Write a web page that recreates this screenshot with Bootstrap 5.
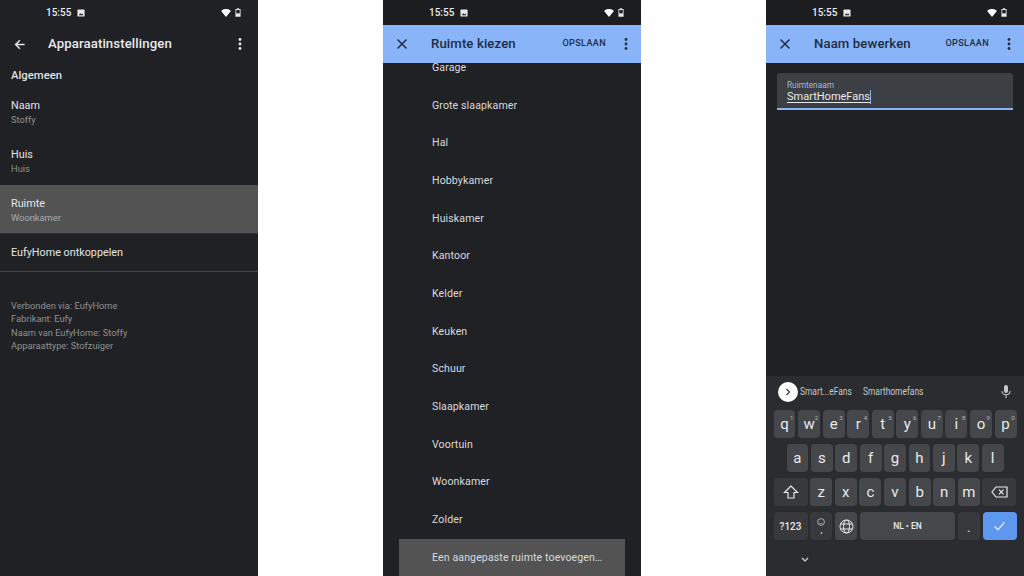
<!DOCTYPE html>
<html lang="nl">
<head>
<meta charset="UTF-8">
<title>Instellingen</title>
<link href="https://cdn.jsdelivr.net/npm/bootstrap@5.3.0/dist/css/bootstrap.min.css" rel="stylesheet">
<style>
html, body { height: 576px; margin: 0; overflow: hidden; background: #fff; }
body { font-family: Roboto, "Liberation Sans", sans-serif; }
.screens { width: 1024px; height: 576px; }
.phone { width: 258px; height: 576px; background: #202124; color: #e8eaed; overflow: hidden; }
.status-bar { height: 25px; padding: 0 17px 0 46px; background: #1c1d20; font-size: 10px; font-weight: 500; color: #e8eaed; flex: none; }
.phone-first .status-bar { background: #202124; }
.status-pic { margin-left: 6px; }
.tool-bar { height: 38px; flex: none; padding: 0 13px 0 12px; }
.phone-first .tool-bar { padding: 0 16px 0 14px; }
.tool-blue { background: #8ab4f8; color: #202c44; }
.tool-title { font-size: 13.2px; font-weight: 500; margin-left: 23px; letter-spacing: .1px; }
.tool-blue .tool-title { margin-left: 22px; }
.save-btn { font-size: 9.1px; font-weight: 500; letter-spacing: .35px; margin-right: 18px; }
.section-label { font-size: 11.3px; font-weight: 500; color: #dfe1e5; padding: 6px 11px 0; height: 24px; line-height: 14px; }
.set-row { height: 49px; padding: 3px 11px 0; }
.set-row b { font-weight: 400; font-size: 10.8px; line-height: 14px; display: block; color: #e3e5e8; }
.set-row span { font-size: 9.3px; line-height: 14px; color: #8e9194; display: block; }
.set-row.active { background: #535353; border-bottom: 1px solid #2e2f32; padding-top: 4px; }
.set-row.active span { color: #a8abae; }
.unlink-row { height: 38px; padding: 2px 11px 0; font-size: 10.8px; color: #e3e5e8; border-bottom: 1.5px solid #46474a; }
.info-lines { padding: 27px 11px 0; font-size: 9.3px; line-height: 13.4px; color: #8e9194; }
.room-list { margin-top: -14px; }
.room-item { height: 37.7px; padding-left: 49px; font-size: 10.6px; color: #d8dade; letter-spacing: .1px; }
.room-add { margin: 0 16px; padding-left: 33px; height: 38px; background: #535353; }
.name-field { margin: 10px 11px 0; height: 37px; background: #3c3f43; border-radius: 3px 3px 0 0; border-bottom: 2px solid #8ab4f8; padding: 7px 10px 0; }
.name-field small { display: block; font-size: 8.3px; line-height: 10px; color: #a5b9d8; }
.name-field span { font-size: 11px; line-height: 14px; text-decoration: underline; text-underline-offset: 2px; border-right: 1px solid #8ab4f8; display: block; width: fit-content; }
.kbd-panel { background: #2a2c30; height: 200px; padding: 0 7.5px; flex: none; }
.suggest-row { height: 31px; margin-bottom: 3px; font-size: 11.5px; color: #c5c8cc; padding-left: 4px; padding-right: 2px; }
.suggest-go { width: 20px; height: 20px; background: #fff; border-radius: 50%; margin-right: 2px; }
.suggest-word { transform: scaleX(.73); transform-origin: left center; width: 63px; white-space: nowrap; }
.key-row { height: 28px; margin-bottom: 6px; gap: 2.6px; }
.key-row-mid { padding: 0 13px; }
.kk { flex: 1 1 0; min-width: 0; background: #45474b; border-radius: 4px; color: #e8eaed; font-size: 15px; position: relative; }
.kk sup { position: absolute; top: 5px; right: 2px; font-size: 6px; line-height: 6px; color: #b5b7ba; }
.kk-dark { background: #37393d; }
.kk-wide { flex: 0 0 34px; }
.kk-sym { font-size: 10px; font-weight: 500; }
.kk-space { flex: 0 0 95px; font-size: 8.5px; font-weight: 500; }
.kk-enter { background: #5e97ee; }
.kk-emoji { font-size: 9px; line-height: 9px; }
.hide-row { height: 26px; padding-left: 27px; }
</style>
</head>
<body>
<div class="screens d-flex justify-content-between">

  <!-- Apparaatinstellingen -->
  <div class="phone phone-first d-flex flex-column">
    <div class="status-bar d-flex align-items-center">
      <span>15:55</span>
      <svg class="status-pic" width="8" height="8" viewBox="0 0 9 9"><rect x=".5" y=".5" width="8" height="8" rx="1" fill="#e8eaed"/><path d="M2 7l1.6-2.2L5 6l1-1 1.2 2z" fill="#202124"/></svg>
      <svg class="ms-auto" width="10" height="8" viewBox="0 0 11 9"><path d="M0 2.2C3-.6 8-.6 11 2.2L5.500 9z" fill="#fff"/></svg>
      <svg class="ms-1" width="6" height="9" viewBox="0 0 7 10"><path d="M2.300 0h2.400v1H6.500v9H.5V1h1.800z" fill="#e8eaed"/><rect x="1.500" y="2" width="4" height="4" fill="#202124"/></svg>
    </div>
    <div class="tool-bar d-flex align-items-center">
      <svg width="11" height="11" viewBox="0 0 14 14"><path d="M13.500 7H2M7.500 1.500L2 7l5.500 5.500" fill="none" stroke="#e8eaed" stroke-width="1.800"/></svg>
      <div class="tool-title">Apparaatinstellingen</div>
      <svg class="ms-auto" width="4" height="12" viewBox="0 0 4 12"><circle cx="2" cy="1.500" r="1.400" fill="#e8eaed"/><circle cx="2" cy="6" r="1.400" fill="#e8eaed"/><circle cx="2" cy="10.500" r="1.400" fill="#e8eaed"/></svg>
    </div>
    <div class="section-label">Algemeen</div>
    <div class="set-row d-flex flex-column justify-content-center"><b>Naam</b><span>Stoffy</span></div>
    <div class="set-row d-flex flex-column justify-content-center"><b>Huis</b><span>Huis</span></div>
    <div class="set-row active d-flex flex-column justify-content-center"><b>Ruimte</b><span>Woonkamer</span></div>
    <div class="unlink-row d-flex align-items-center">EufyHome ontkoppelen</div>
    <div class="info-lines">Verbonden via: EufyHome<br>Fabrikant: Eufy<br>Naam van EufyHome: Stoffy<br>Apparaattype: Stofzuiger</div>
  </div>

  <!-- Ruimte kiezen -->
  <div class="phone d-flex flex-column">
    <div class="status-bar d-flex align-items-center">
      <span>15:55</span>
      <svg class="status-pic" width="8" height="8" viewBox="0 0 9 9"><rect x=".5" y=".5" width="8" height="8" rx="1" fill="#e8eaed"/><path d="M2 7l1.6-2.2L5 6l1-1 1.2 2z" fill="#202124"/></svg>
      <svg class="ms-auto" width="10" height="8" viewBox="0 0 11 9"><path d="M0 2.2C3-.6 8-.6 11 2.2L5.500 9z" fill="#fff"/></svg>
      <svg class="ms-1" width="6" height="9" viewBox="0 0 7 10"><path d="M2.300 0h2.400v1H6.500v9H.5V1h1.800z" fill="#e8eaed"/><rect x="1.500" y="2" width="4" height="4" fill="#202124"/></svg>
    </div>
    <div class="tool-bar tool-blue d-flex align-items-center">
      <svg width="14" height="12" viewBox="0 0 14 12"><path d="M2.500 1.500l9 9M11.500 1.500l-9 9" fill="none" stroke="#202c44" stroke-width="1.500"/></svg>
      <div class="tool-title">Ruimte kiezen</div>
      <div class="save-btn ms-auto">OPSLAAN</div>
      <svg width="4" height="12" viewBox="0 0 4 12"><circle cx="2" cy="1.500" r="1.400" fill="#202c44"/><circle cx="2" cy="6" r="1.400" fill="#202c44"/><circle cx="2" cy="10.500" r="1.400" fill="#202c44"/></svg>
    </div>
    <div class="overflow-hidden flex-grow-1">
      <div class="room-list">
        <div class="room-item d-flex align-items-center">Garage</div>
        <div class="room-item d-flex align-items-center">Grote slaapkamer</div>
        <div class="room-item d-flex align-items-center">Hal</div>
        <div class="room-item d-flex align-items-center">Hobbykamer</div>
        <div class="room-item d-flex align-items-center">Huiskamer</div>
        <div class="room-item d-flex align-items-center">Kantoor</div>
        <div class="room-item d-flex align-items-center">Kelder</div>
        <div class="room-item d-flex align-items-center">Keuken</div>
        <div class="room-item d-flex align-items-center">Schuur</div>
        <div class="room-item d-flex align-items-center">Slaapkamer</div>
        <div class="room-item d-flex align-items-center">Voortuin</div>
        <div class="room-item d-flex align-items-center">Woonkamer</div>
        <div class="room-item d-flex align-items-center">Zolder</div>
        <div class="room-item room-add d-flex align-items-center">Een aangepaste ruimte toevoegen…</div>
      </div>
    </div>
  </div>

  <!-- Naam bewerken -->
  <div class="phone d-flex flex-column">
    <div class="status-bar d-flex align-items-center">
      <span>15:55</span>
      <svg class="status-pic" width="8" height="8" viewBox="0 0 9 9"><rect x=".5" y=".5" width="8" height="8" rx="1" fill="#e8eaed"/><path d="M2 7l1.6-2.2L5 6l1-1 1.2 2z" fill="#202124"/></svg>
      <svg class="ms-auto" width="10" height="8" viewBox="0 0 11 9"><path d="M0 2.2C3-.6 8-.6 11 2.2L5.500 9z" fill="#fff"/></svg>
      <svg class="ms-1" width="6" height="9" viewBox="0 0 7 10"><path d="M2.300 0h2.400v1H6.500v9H.5V1h1.800z" fill="#e8eaed"/><rect x="1.500" y="2" width="4" height="4" fill="#202124"/></svg>
    </div>
    <div class="tool-bar tool-blue d-flex align-items-center">
      <svg width="14" height="12" viewBox="0 0 14 12"><path d="M2.500 1.500l9 9M11.500 1.500l-9 9" fill="none" stroke="#202c44" stroke-width="1.500"/></svg>
      <div class="tool-title">Naam bewerken</div>
      <div class="save-btn ms-auto">OPSLAAN</div>
      <svg width="4" height="12" viewBox="0 0 4 12"><circle cx="2" cy="1.500" r="1.400" fill="#202c44"/><circle cx="2" cy="6" r="1.400" fill="#202c44"/><circle cx="2" cy="10.500" r="1.400" fill="#202c44"/></svg>
    </div>
    <div class="name-field">
      <small>Ruimtenaam</small>
      <span>SmartHomeFans</span>
    </div>
    <div class="flex-grow-1"></div>
    <div class="kbd-panel">
      <div class="suggest-row d-flex align-items-center">
        <div class="suggest-go d-flex align-items-center justify-content-center flex-shrink-0">
          <svg width="6" height="8" viewBox="0 0 6 8"><path d="M1.500 1l3 3-3 3" fill="none" stroke="#3c4043" stroke-width="1.300"/></svg>
        </div>
        <div class="suggest-word">Smart...eFans</div>
        <div class="suggest-word">Smarthomefans</div>
        <svg class="ms-auto me-1" width="10" height="13" viewBox="0 0 10 13"><rect x="3" y="0" width="4" height="8" rx="2" fill="#c5c8cc"/><path d="M1 6c0 5 8 5 8 0M5 10v3" fill="none" stroke="#c5c8cc" stroke-width="1.100"/></svg>
      </div>
      <div class="key-row d-flex">
        <div class="kk d-flex align-items-center justify-content-center">q<sup>1</sup></div>
        <div class="kk d-flex align-items-center justify-content-center">w<sup>2</sup></div>
        <div class="kk d-flex align-items-center justify-content-center">e<sup>3</sup></div>
        <div class="kk d-flex align-items-center justify-content-center">r<sup>4</sup></div>
        <div class="kk d-flex align-items-center justify-content-center">t<sup>5</sup></div>
        <div class="kk d-flex align-items-center justify-content-center">y<sup>6</sup></div>
        <div class="kk d-flex align-items-center justify-content-center">u<sup>7</sup></div>
        <div class="kk d-flex align-items-center justify-content-center">i<sup>8</sup></div>
        <div class="kk d-flex align-items-center justify-content-center">o<sup>9</sup></div>
        <div class="kk d-flex align-items-center justify-content-center">p<sup>0</sup></div>
      </div>
      <div class="key-row key-row-mid d-flex">
        <div class="kk d-flex align-items-center justify-content-center">a</div>
        <div class="kk d-flex align-items-center justify-content-center">s</div>
        <div class="kk d-flex align-items-center justify-content-center">d</div>
        <div class="kk d-flex align-items-center justify-content-center">f</div>
        <div class="kk d-flex align-items-center justify-content-center">g</div>
        <div class="kk d-flex align-items-center justify-content-center">h</div>
        <div class="kk d-flex align-items-center justify-content-center">j</div>
        <div class="kk d-flex align-items-center justify-content-center">k</div>
        <div class="kk d-flex align-items-center justify-content-center">l</div>
      </div>
      <div class="key-row d-flex">
        <div class="kk kk-dark kk-wide d-flex align-items-center justify-content-center">
          <svg width="16" height="14" viewBox="0 0 16 14"><path d="M8 1L1.500 7.500H5V13h6V7.500h3.500z" fill="none" stroke="#e8eaed" stroke-width="1.200"/></svg>
        </div>
        <div class="kk d-flex align-items-center justify-content-center">z</div>
        <div class="kk d-flex align-items-center justify-content-center">x</div>
        <div class="kk d-flex align-items-center justify-content-center">c</div>
        <div class="kk d-flex align-items-center justify-content-center">v</div>
        <div class="kk d-flex align-items-center justify-content-center">b</div>
        <div class="kk d-flex align-items-center justify-content-center">n</div>
        <div class="kk d-flex align-items-center justify-content-center">m</div>
        <div class="kk kk-dark kk-wide d-flex align-items-center justify-content-center">
          <svg width="17" height="12" viewBox="0 0 17 12"><path d="M5 1h11v10H5L1 6z" fill="none" stroke="#e8eaed" stroke-width="1.200"/><path d="M8 3.700l4.500 4.600M12.500 3.700L8 8.300" stroke="#e8eaed" stroke-width="1.200"/></svg>
        </div>
      </div>
      <div class="key-row d-flex">
        <div class="kk kk-dark kk-wide kk-sym d-flex align-items-center justify-content-center">?123</div>
        <div class="kk kk-dark kk-emoji d-flex flex-column align-items-center justify-content-center">
          <svg width="8" height="8" viewBox="0 0 8 8"><circle cx="4" cy="4" r="3.400" fill="none" stroke="#c5c8cc" stroke-width=".8"/><path d="M2.300 5c1 1 2.400 1 3.400 0" fill="none" stroke="#c5c8cc" stroke-width=".7"/></svg>
          <span>,</span>
        </div>
        <div class="kk d-flex align-items-center justify-content-center">
          <svg width="15" height="15" viewBox="0 0 15 15"><g fill="none" stroke="#e8eaed" stroke-width="1"><circle cx="7.500" cy="7.500" r="6.500"/><ellipse cx="7.500" cy="7.500" rx="3" ry="6.500"/><path d="M1.500 5h12M1.500 10h12"/></g></svg>
        </div>
        <div class="kk kk-space d-flex align-items-center justify-content-center">NL • EN</div>
        <div class="kk kk-dark kk-sym d-flex align-items-end justify-content-center pb-1">.</div>
        <div class="kk kk-enter kk-wide d-flex align-items-center justify-content-center">
          <svg width="13" height="10" viewBox="0 0 13 10"><path d="M1.500 5.500l3.500 3.300 6.500-7.500" fill="none" stroke="#dce8fb" stroke-width="1.400"/></svg>
        </div>
      </div>
      <div class="hide-row d-flex align-items-center">
        <svg width="8" height="5" viewBox="0 0 8 5"><path d="M1 1l3 3 3-3" fill="none" stroke="#d5d7da" stroke-width="1.200"/></svg>
      </div>
    </div>
  </div>
</div>
<script src="https://cdn.jsdelivr.net/npm/bootstrap@5.3.0/dist/js/bootstrap.bundle.min.js"></script>
</body>
</html>
